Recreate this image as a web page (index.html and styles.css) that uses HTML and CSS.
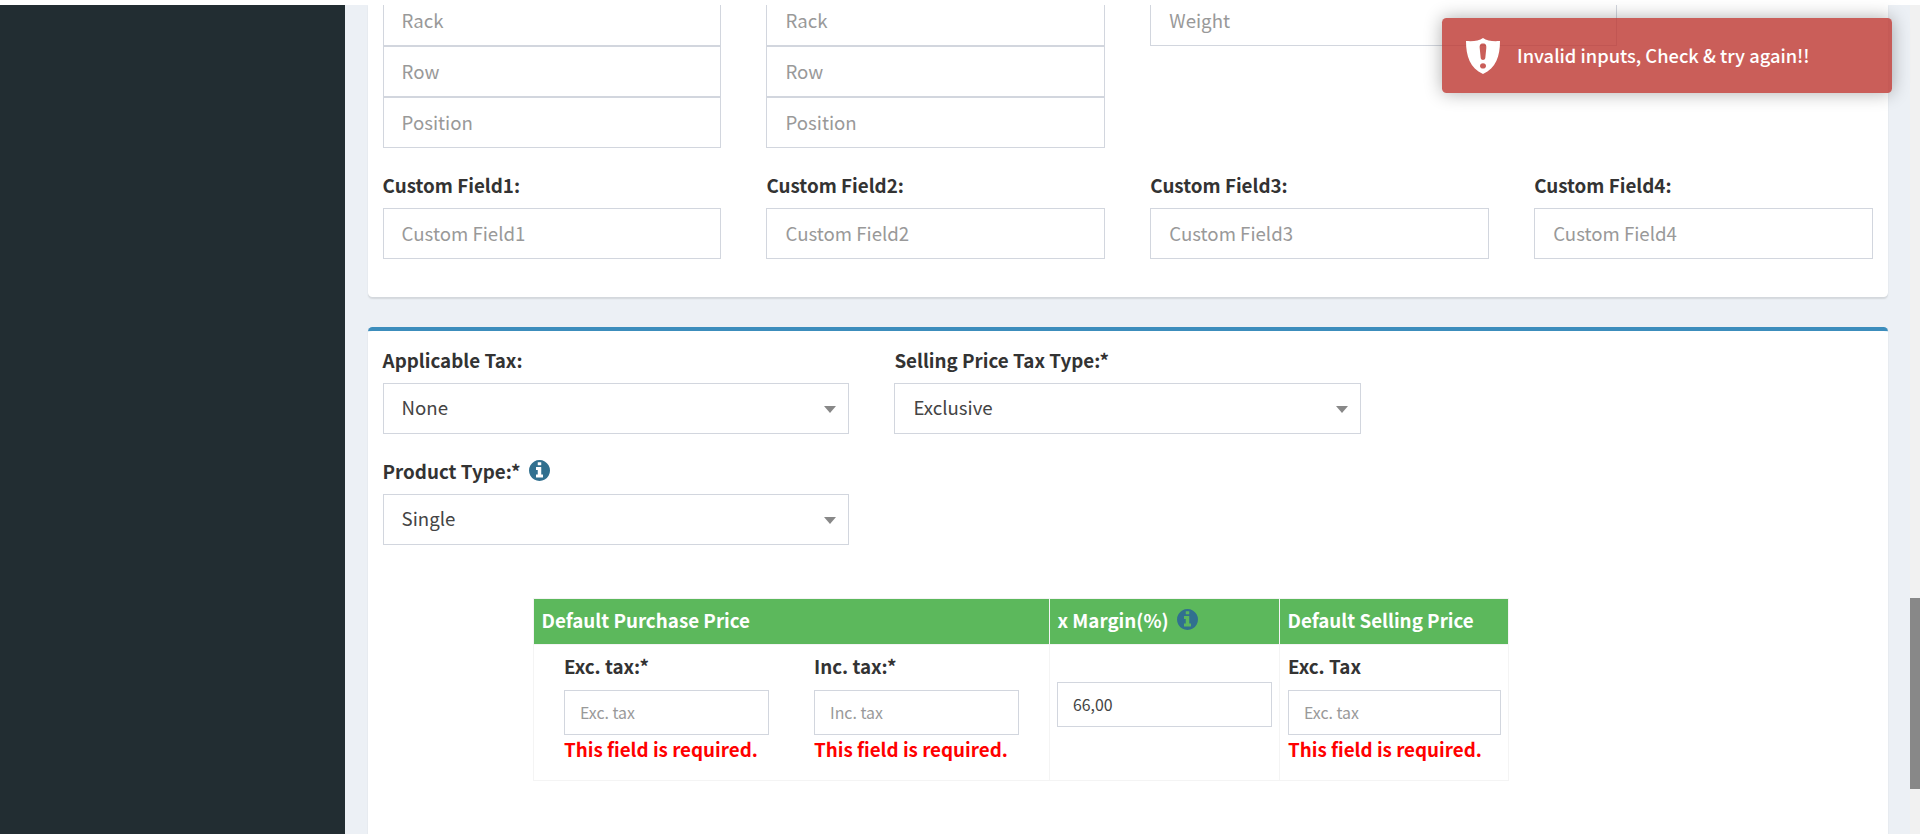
FILE: index.html
```html
<!DOCTYPE html>
<html lang="en">
<head>
<meta charset="utf-8">
<title>Add product</title>
<link rel="stylesheet" href="styles.css">
</head>
<body>
<svg class="defs" aria-hidden="true">
  <symbol id="info" viewBox="0 0 1536 1536"><path fill="currentColor" d="M1024 1248v-160q0-14-9-23t-23-9h-96V544q0-14-9-23t-23-9H544q-14 0-23 9t-9 23v160q0 14 9 23t23 9h96v320h-96q-14 0-23 9t-9 23v160q0 14 9 23t23 9h448q14 0 23-9t9-23zM896 352V192q0-14-9-23t-23-9H672q-14 0-23 9t-9 23v160q0 14 9 23t23 9h192q14 0 23-9t9-23zm640 416q0 209-103 385.500T1153.500 1433 768 1536t-385.500-103T103 1153.500 0 768t103-385.500T382.500 103 768 0t385.500 103T1433 382.500 1536 768z"/></symbol>
</svg>
<div class="topstrip"></div>
<div class="app">
  <aside class="sidebar"></aside>
  <main class="content">
    <section class="box box-first">
      <div class="racks">
        <div class="stack">
          <input class="field" placeholder="Rack"><input class="field" placeholder="Row"><input class="field" placeholder="Position">
        </div>
        <div class="stack">
          <input class="field" placeholder="Rack"><input class="field" placeholder="Row"><input class="field" placeholder="Position">
        </div>
        <div class="stack weight"><input class="field" placeholder="Weight"></div>
      </div>
      <div class="custom">
        <div><label class="label">Custom Field1:</label><input class="field" placeholder="Custom Field1"></div>
        <div><label class="label">Custom Field2:</label><input class="field" placeholder="Custom Field2"></div>
        <div><label class="label">Custom Field3:</label><input class="field" placeholder="Custom Field3"></div>
        <div><label class="label">Custom Field4:</label><input class="field" placeholder="Custom Field4"></div>
      </div>
    </section>
    <section class="box box-price">
      <div class="selects">
        <div><label class="label">Applicable Tax:</label><div class="field select"><span>None</span><i class="caret"></i></div></div>
        <div><label class="label">Selling Price Tax Type:*</label><div class="field select"><span>Exclusive</span><i class="caret"></i></div></div>
        <div></div>
        <div><label class="label">Product Type:* <svg class="info"><use href="#info"/></svg></label><div class="field select"><span>Single</span><i class="caret"></i></div></div>
      </div>
      <div class="prices">
        <div class="th">Default Purchase Price</div>
        <div class="th">x Margin(%) <svg class="info"><use href="#info"/></svg></div>
        <div class="th">Default Selling Price</div>
        <div class="td purchase">
          <div><label class="label small-label">Exc. tax:*</label><input class="field sm" placeholder="Exc. tax"><div class="error">This field is required.</div></div>
          <div><label class="label small-label">Inc. tax:*</label><input class="field sm" placeholder="Inc. tax"><div class="error">This field is required.</div></div>
        </div>
        <div class="td margin"><input class="field sm" value="66,00"></div>
        <div class="td"><label class="label small-label">Exc. Tax</label><input class="field sm" placeholder="Exc. tax"><div class="error">This field is required.</div></div>
      </div>
    </section>
  </main>
  <div class="scrollbar"><div class="thumb"></div></div>
</div>
<div class="toast">
  <svg class="shield" viewBox="0 0 34 36"><path fill="#fff" fill-rule="evenodd" d="M17 0C13 3 7 3.500 0 3C0 18 4 30 17 36C30 30 34 18 34 3C27 3.500 21 3 17 0ZM17 5.500C20 5.500 20.500 7.500 20.300 10L19.300 20C19 22.500 15 22.500 14.700 20L13.700 10C13.500 7.500 14 5.500 17 5.500ZM17 25.200C21 25.200 21 30.600 17 30.600C13 30.600 13 25.200 17 25.200Z"/></svg>
  <span class="toast-text">Invalid inputs, Check &amp; try again!!</span>
</div>
</body>
</html>
```
FILE: styles.css
```css
* { box-sizing: border-box; }
body {
  margin: 0;
  height: 834px;
  overflow: hidden;
  background: #fff;
  color: #333;
  font-family: "Noto Sans CJK SC", "Noto Sans", sans-serif;
  font-size: 18.8px;
  line-height: 30px;
}
.defs { position: absolute; width: 0; height: 0; }
.topstrip { height: 5px; }
.app { display: flex; height: 829px; }
.sidebar { width: 345px; background: #222d32; }
.content { flex: 1; padding: 0 22px 0 22.6px; background: #ecf0f5; overflow: hidden; }
.scrollbar { width: 10px; background: #f1f1f1; padding-top: 593px; }
.thumb { height: 191px; background: #888; }

.box { background: #fff; padding: 0 15px; box-shadow: 0 1.5px 1.5px rgba(0, 0, 0, .1); }
.box-first { height: 292px; border-radius: 0 0 4.5px 4.5px; }
.box-price { margin-top: 30px; height: 520px; border-top: 4px solid #3c8dbc; border-radius: 4.5px; padding-top: 15px; }

.racks, .custom { display: grid; grid-template-columns: repeat(4, minmax(0, 1fr)); column-gap: 45px; }
/* the first rack row is partly scrolled out of view */
.racks { height: 143px; grid-template-rows: 143px; overflow: hidden; }
.stack { display: flex; flex-direction: column; margin-top: -10px; }
.weight { width: 466.67px; }
.custom { padding-top: 22px; }

.label { display: block; height: 38px; font-weight: 700; white-space: pre; }
.field {
  display: block;
  width: 100%;
  height: 51px;
  flex-shrink: 0;
  padding: 0 18px 2px;
  border: 1px solid #d2d6de;
  border-radius: 0;
  background: #fff;
  color: #444;
  font: inherit;
  font-size: 18.65px;
  font-weight: 400;
  outline: 0;
}
.field::placeholder { color: #999; opacity: 1; }

.selects { display: grid; grid-template-columns: repeat(3, minmax(0, 1fr)); gap: 22px 45px; margin-top: -1px; }
.selects .label { height: 38px; }
.select { display: flex; justify-content: space-between; align-items: center; padding: 0 12px 3px 18px; }
.caret { border: 6px solid transparent; border-top: 7px solid #888; border-bottom: 0; margin-top: 4px; }
.info { display: inline-block; width: 21px; height: 21px; margin-left: 4px; color: #31708f; vertical-align: -2px; }

.prices {
  display: grid;
  grid-template-columns: 515px 229px 228px;
  grid-template-rows: 45px 135px;
  gap: 1px;
  width: 976px;
  margin: 53px 0 0 150.4px;
  padding: 1px;
  background: #f4f4f4;
}
.th { background: #5cb85c; color: #fff; font-weight: 700; padding: 6px 7.5px; white-space: pre; }
.td { background: #fff; padding: 6px 7px 0 8px; }
.purchase { display: grid; grid-template-columns: 205px 205px; gap: 45px; padding-left: 30px; }
.small-label { height: 39px; }
.field.sm { height: 45px; padding: 0 15px; font-size: 15.9px; }
.margin { padding: 37px 7px 0; }
.error { margin-top: -1px; color: #f00; font-weight: 700; white-space: nowrap; }

.toast {
  position: absolute;
  left: 1442px;
  top: 18px;
  display: flex;
  align-items: center;
  width: 450px;
  height: 75px;
  padding-left: 24px;
  gap: 17px;
  border-radius: 4.5px;
  background: rgba(189, 54, 47, .8);
  color: #fff;
  box-shadow: 0 0 18px rgba(0, 0, 0, .32);
}
.shield { width: 34px; height: 36px; }
.toast-text { padding-bottom: 2px; font-size: 18.3px; font-weight: 500; white-space: nowrap; }
```
